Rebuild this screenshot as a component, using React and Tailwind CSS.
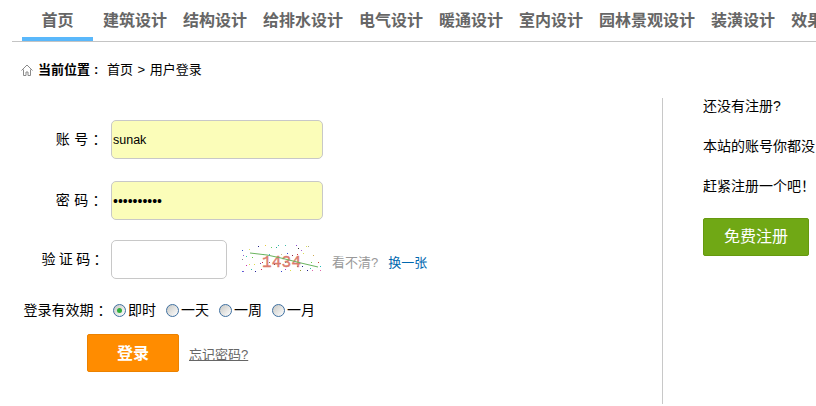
const font = { fontFamily: '"Liberation Sans", "Noto Sans CJK SC", sans-serif' };

const navItems = ["建筑设计", "结构设计", "给排水设计", "电气设计", "暖通设计", "室内设计", "园林景观设计", "装潢设计", "效果图设计"];

// captcha noise: x, y (in 3x crop units), colour
const noise = [
  [22, 30, "#3355cc"], [43, 28, "#dddd66"], [70, 19, "#222288"], [90, 16, "#e8c840"], [107, 22, "#66cc66"],
  [122, 21, "#22aa99"], [128, 14, "#33bbaa"], [150, 16, "#44bbaa"], [182, 16, "#8844cc"], [190, 23, "#333333"],
  [198, 29, "#aa66cc"], [213, 19, "#dddd55"], [220, 19, "#aaaa88"], [25, 45, "#8866cc"], [33, 48, "#33ccaa"],
  [50, 50, "#66cc44"], [85, 41, "#33bbbb"], [103, 41, "#44aacc"], [137, 43, "#ccbb88"], [155, 38, "#3344cc"],
  [170, 46, "#882244"], [187, 43, "#cc3344"], [205, 40, "#dddd55"], [235, 46, "#ccaa55"], [22, 56, "#888888"],
  [43, 73, "#dddd55"], [32, 75, "#cc33aa"], [58, 72, "#dddd44"], [75, 68, "#8844aa"], [82, 67, "#cc3344"],
  [118, 72, "#222222"], [103, 65, "#888833"], [135, 70, "#999944"], [150, 67, "#33aaaa"], [200, 78, "#222288"],
  [228, 65, "#66cc44"], [248, 66, "#cc4433"], [255, 79, "#22bbbb"], [48, 88, "#33bbaa"], [22, 92, "#4466dd"],
  [25, 94, "#8855cc"], [60, 94, "#222299"], [78, 88, "#cc3366"], [138, 93, "#3344cc"], [150, 88, "#aa44cc"],
  [165, 89, "#dddd44"], [195, 90, "#999933"], [215, 90, "#222288"], [225, 84, "#33bbaa"], [230, 90, "#dd66aa"],
  [255, 90, "#dd66aa"], [185, 78, "#882266"],
];

function Captcha() {
  return (
    <svg width="82" height="32" viewBox="0 0 82 32" className="shrink-0">
      {noise.map(([x, y, c], i) => (
        <rect key={i} x={Math.round(x / 3) - 6} y={Math.round(y / 3) - 4} width="1" height="1" fill={c} />
      ))}
      <text x="21" y="23" fontFamily="Liberation Mono" fontSize="16" letterSpacing="0.2" stroke="#dc7a6c" strokeWidth="0.4" fill="#dc7a6c">1434</text>
      <path d="M9 9 L26 11 L40 14 L60 19 L77 23" fill="none" stroke="#6ab45e" strokeWidth="1" />
    </svg>
  );
}

function Radio({ label, checked }) {
  return (
    <label className="flex items-center">
      <span className="w-[13px] h-[13px] rounded-full border border-[#3f70a0] bg-gradient-to-br from-[#c8c8c4] to-[#ffffff] flex items-center justify-center">
        {checked && <span className="w-[5px] h-[5px] rounded-full bg-[#2fae3c]" />}
      </span>
      <span className="ml-[2px] text-[14px] text-black">{label}</span>
    </label>
  );
}

function Row({ label, className, labelClass, children }) {
  return (
    <div className={`flex items-center ${className}`}>
      <div className={`w-[101px] text-right text-[14px] text-black whitespace-pre shrink-0 ${labelClass}`}>{label}</div>
      {children}
    </div>
  );
}

export default function App() {
  return (
    <div className="w-[816px] h-[406px] overflow-hidden bg-white" style={font}>
      {/* Top nav */}
      <div className="ml-3 h-[42px] flex border-b border-[#c4c4c4] whitespace-nowrap">
        <div className="ml-[10px] w-[71px] h-[41px] border-b-4 border-[#5ab8fb] text-center text-[16px] leading-[42px] font-bold text-[#666] shrink-0">
          首页
        </div>
        <div className="ml-[10px] flex gap-[16px] items-start h-[41px]">
          {navItems.map((n) => (
            <span key={n} className="text-[16px] leading-[42px] font-bold text-[#666]">{n}</span>
          ))}
        </div>
      </div>

      {/* Breadcrumb */}
      <div className="mt-[19px] ml-[21px] h-[18px] flex items-center text-[13px] text-black">
        <svg width="12" height="12" viewBox="0 0 12 12" fill="none" stroke="#8a8a8a" strokeWidth="1" className="mr-[5px]">
          <path d="M0.5 6.5 L6 1 L11.5 6.5" />
          <path d="M2.5 5.5 V11.5 H5 V8 H7 V11.5 H9.5 V5.5" />
        </svg>
        <b className="w-[69px]">当前位置<span className="ml-[4px]">:</span></b>
        <span className="[word-spacing:1px]">首页 &gt; 用户登录</span>
      </div>

      <div className="mt-[19px] flex">
        {/* Login form */}
        <div className="w-[651px] h-[306px] pt-[22px] pl-[10px] shrink-0">
          <Row label="账 号 ： " labelClass="[word-spacing:0.5px]">
            <input
              readOnly
              value="sunak"
              className="w-[212px] h-[39px] rounded-[5px] border border-[#c8c8c8] bg-[#fbfdb9] pl-[1px] text-[12.5px] text-black outline-none"
            />
          </Row>
          <Row label="密 码 ： " labelClass="[word-spacing:0.5px]" className="mt-[22px]">
            <input
              readOnly
              type="password"
              value="1234567890"
              className="w-[212px] h-[39px] rounded-[5px] border border-[#c8c8c8] bg-[#fbfdb9] pl-[1px] text-[14px] text-black outline-none"
            />
          </Row>
          <Row label="验 证 码 ： " labelClass="[word-spacing:-0.5px]" className="mt-[20px]">
            <input readOnly className="w-[116px] h-[39px] rounded-[5px] border border-[#c8c8c8] bg-white outline-none" />
            <div className="ml-[14px] mr-[9px]">
              <Captcha />
            </div>
            <span className="mt-[6px] text-[13px] text-[#999]">看不清?</span>
            <a className="ml-[10px] mt-[6px] text-[13px] text-[#0068b0]">换一张</a>
          </Row>
          <div className="mt-[21px] flex items-center h-[20px] ml-[13.5px] text-[14px] text-black">
            <span className="w-[89.5px] whitespace-nowrap">登录有效期 ：</span>
            <div className="flex gap-[10px]">
              <Radio label="即时" checked />
              <Radio label="一天" />
              <Radio label="一周" />
              <Radio label="一月" />
            </div>
          </div>
          <div className="mt-[14px] ml-[77px] flex items-center">
            <button className="w-[92px] h-[38px] pt-[2px] rounded-[2px] border border-[#ec8200] bg-[#ff8c00] text-[16px] font-bold text-white">
              登录
            </button>
            <a className="ml-[10px] mt-[3px] text-[13px] text-[#666] underline">忘记密码?</a>
          </div>
        </div>

        {/* Register side */}
        <div className="ml-[11px] w-px h-[306px] bg-[#c8c8c8] shrink-0" />
        <div className="ml-[40px] w-[113px] overflow-hidden text-[14px] text-black shrink-0">
          <p className="leading-[16px] whitespace-nowrap">还没有注册?</p>
          <p className="mt-[24px] leading-[16px] whitespace-nowrap">本站的账号你都没</p>
          <p className="mt-[24px] leading-[16px] whitespace-nowrap">赶紧注册一个吧！</p>
          <button className="mt-[24px] w-[106px] h-[38px] rounded-[2px] border border-[#66990f] bg-[#70a815] text-[16px] text-white">
            免费注册
          </button>
        </div>
      </div>
    </div>
  );
}
